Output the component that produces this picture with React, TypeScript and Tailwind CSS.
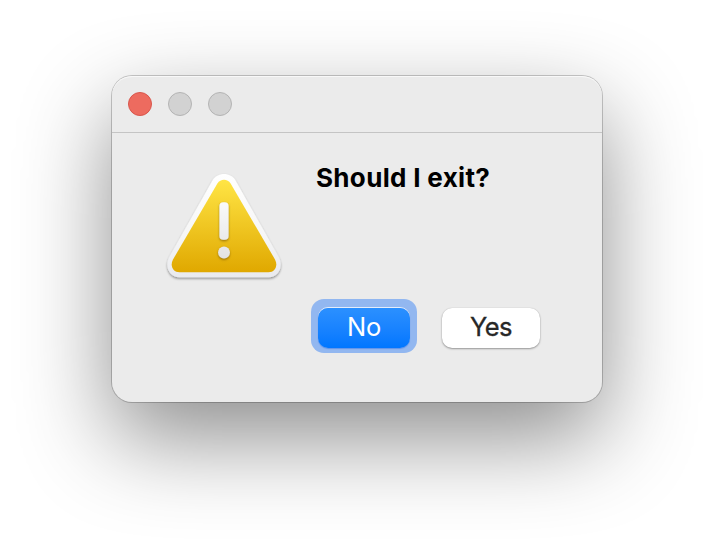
function WarningIcon() {
  return (
    <svg width="128" height="128" viewBox="0 0 128 128" className="block" aria-label="Warning">
      <defs>
        <linearGradient id="frame" x1="0" y1="0" x2="0" y2="1">
          <stop offset="0" stopColor="#ffffff" />
          <stop offset="0.6" stopColor="#f6f6f6" />
          <stop offset="1" stopColor="#e9eaee" />
        </linearGradient>
        <linearGradient id="fill" x1="0" y1="0" x2="0" y2="1">
          <stop offset="0" stopColor="#ffe545" />
          <stop offset="1" stopColor="#e0a800" />
        </linearGradient>
        <linearGradient id="mark" gradientUnits="userSpaceOnUse" x1="0" y1="42" x2="0" y2="98">
          <stop offset="0" stopColor="#fafafa" />
          <stop offset="1" stopColor="#e3e3e3" />
        </linearGradient>
        <filter id="drop" x="-10%" y="-10%" width="120%" height="125%">
          <feDropShadow dx="0" dy="1.5" stdDeviation="1.3" floodColor="#000" floodOpacity="0.4" />
        </filter>
        <filter id="markDrop" x="-50%" y="-20%" width="200%" height="140%">
          <feDropShadow dx="0" dy="1.2" stdDeviation="1.1" floodColor="#6b4b00" floodOpacity="0.65" />
        </filter>
      </defs>
      <path
        d="M52.3 20.8C57.4 11.9 70.6 11.9 75.7 20.8L118.8 97C123.8 106.5 118.5 117.3 108.8 117.3H19.2C9.5 117.3 4.2 106.5 9.2 97Z"
        fill="url(#frame)"
        filter="url(#drop)"
      />
      <path
        d="M57.4 23.5C60.5 18.6 67.5 18.6 70.6 23.5L115 99.5C118.2 105.5 115.2 112.2 108.5 112.2H19.5C12.8 112.2 9.8 105.5 13 99.5Z"
        fill="url(#fill)"
      />
      <g fill="url(#mark)" filter="url(#markDrop)">
        <rect x="59.4" y="42.3" width="9.2" height="37.4" rx="3.8" />
        <circle cx="64" cy="92.5" r="5.9" />
      </g>
    </svg>
  );
}

export default function App() {
  return (
    <div className="flex h-[550px] w-[714px] justify-center overflow-hidden bg-white pt-[76px] font-['Inter','Liberation_Sans',sans-serif]">
      <div className="h-[326px] w-[490px] rounded-[20px] bg-[#ebebeb] shadow-[inset_0_1px_0_#f8f8f8,0_0_0_1px_rgba(0,0,0,0.2),0_36px_92px_rgba(0,0,0,0.45)]">
        <div className="flex h-[57px] gap-4 border-b border-[#c4c4c4] pt-4 pl-4">
          <span className="size-6 rounded-full border border-[#d9564c] bg-[#ed6b5f]" />
          <span className="size-6 rounded-full border border-[#b4b4b4] bg-[#d2d2d2]" />
          <span className="size-6 rounded-full border border-[#b4b4b4] bg-[#d2d2d2]" />
        </div>
        <div className="flex pt-[27px] pl-12">
          <WarningIcon />
          <div className="pl-[23px]">
            <h1 className="h-[139px] pl-[5px] text-[26px] leading-9 font-bold tracking-[0.33px] whitespace-nowrap text-black">
              Should I exit?
            </h1>
            <div className="flex items-center gap-[25px]">
              <div className="rounded-[13px] bg-[#92b7f0] px-[7px] pt-[9px] pb-[5px]">
                <button className="block h-10 w-[92px] rounded-[10px] bg-linear-to-b from-[#2b90ff] to-[#0076ff] pb-0.5 text-[25.5px] leading-[38px] tracking-[-0.2px] text-white shadow-[0_-1px_0_#e3edfb,0_1px_1px_rgba(0,80,220,0.35)]">
                  No
                </button>
              </div>
              <button className="mt-1 block h-10 w-[98px] rounded-[10px] bg-white pb-0.5 text-[25.5px] leading-[38px] tracking-[-0.6px] text-[#272727] shadow-[0_0_1px_rgba(0,0,0,0.2),0_1px_2px_rgba(0,0,0,0.35)] [-webkit-text-stroke:0.3px_#272727]">
                Yes
              </button>
            </div>
          </div>
        </div>
      </div>
    </div>
  );
}
